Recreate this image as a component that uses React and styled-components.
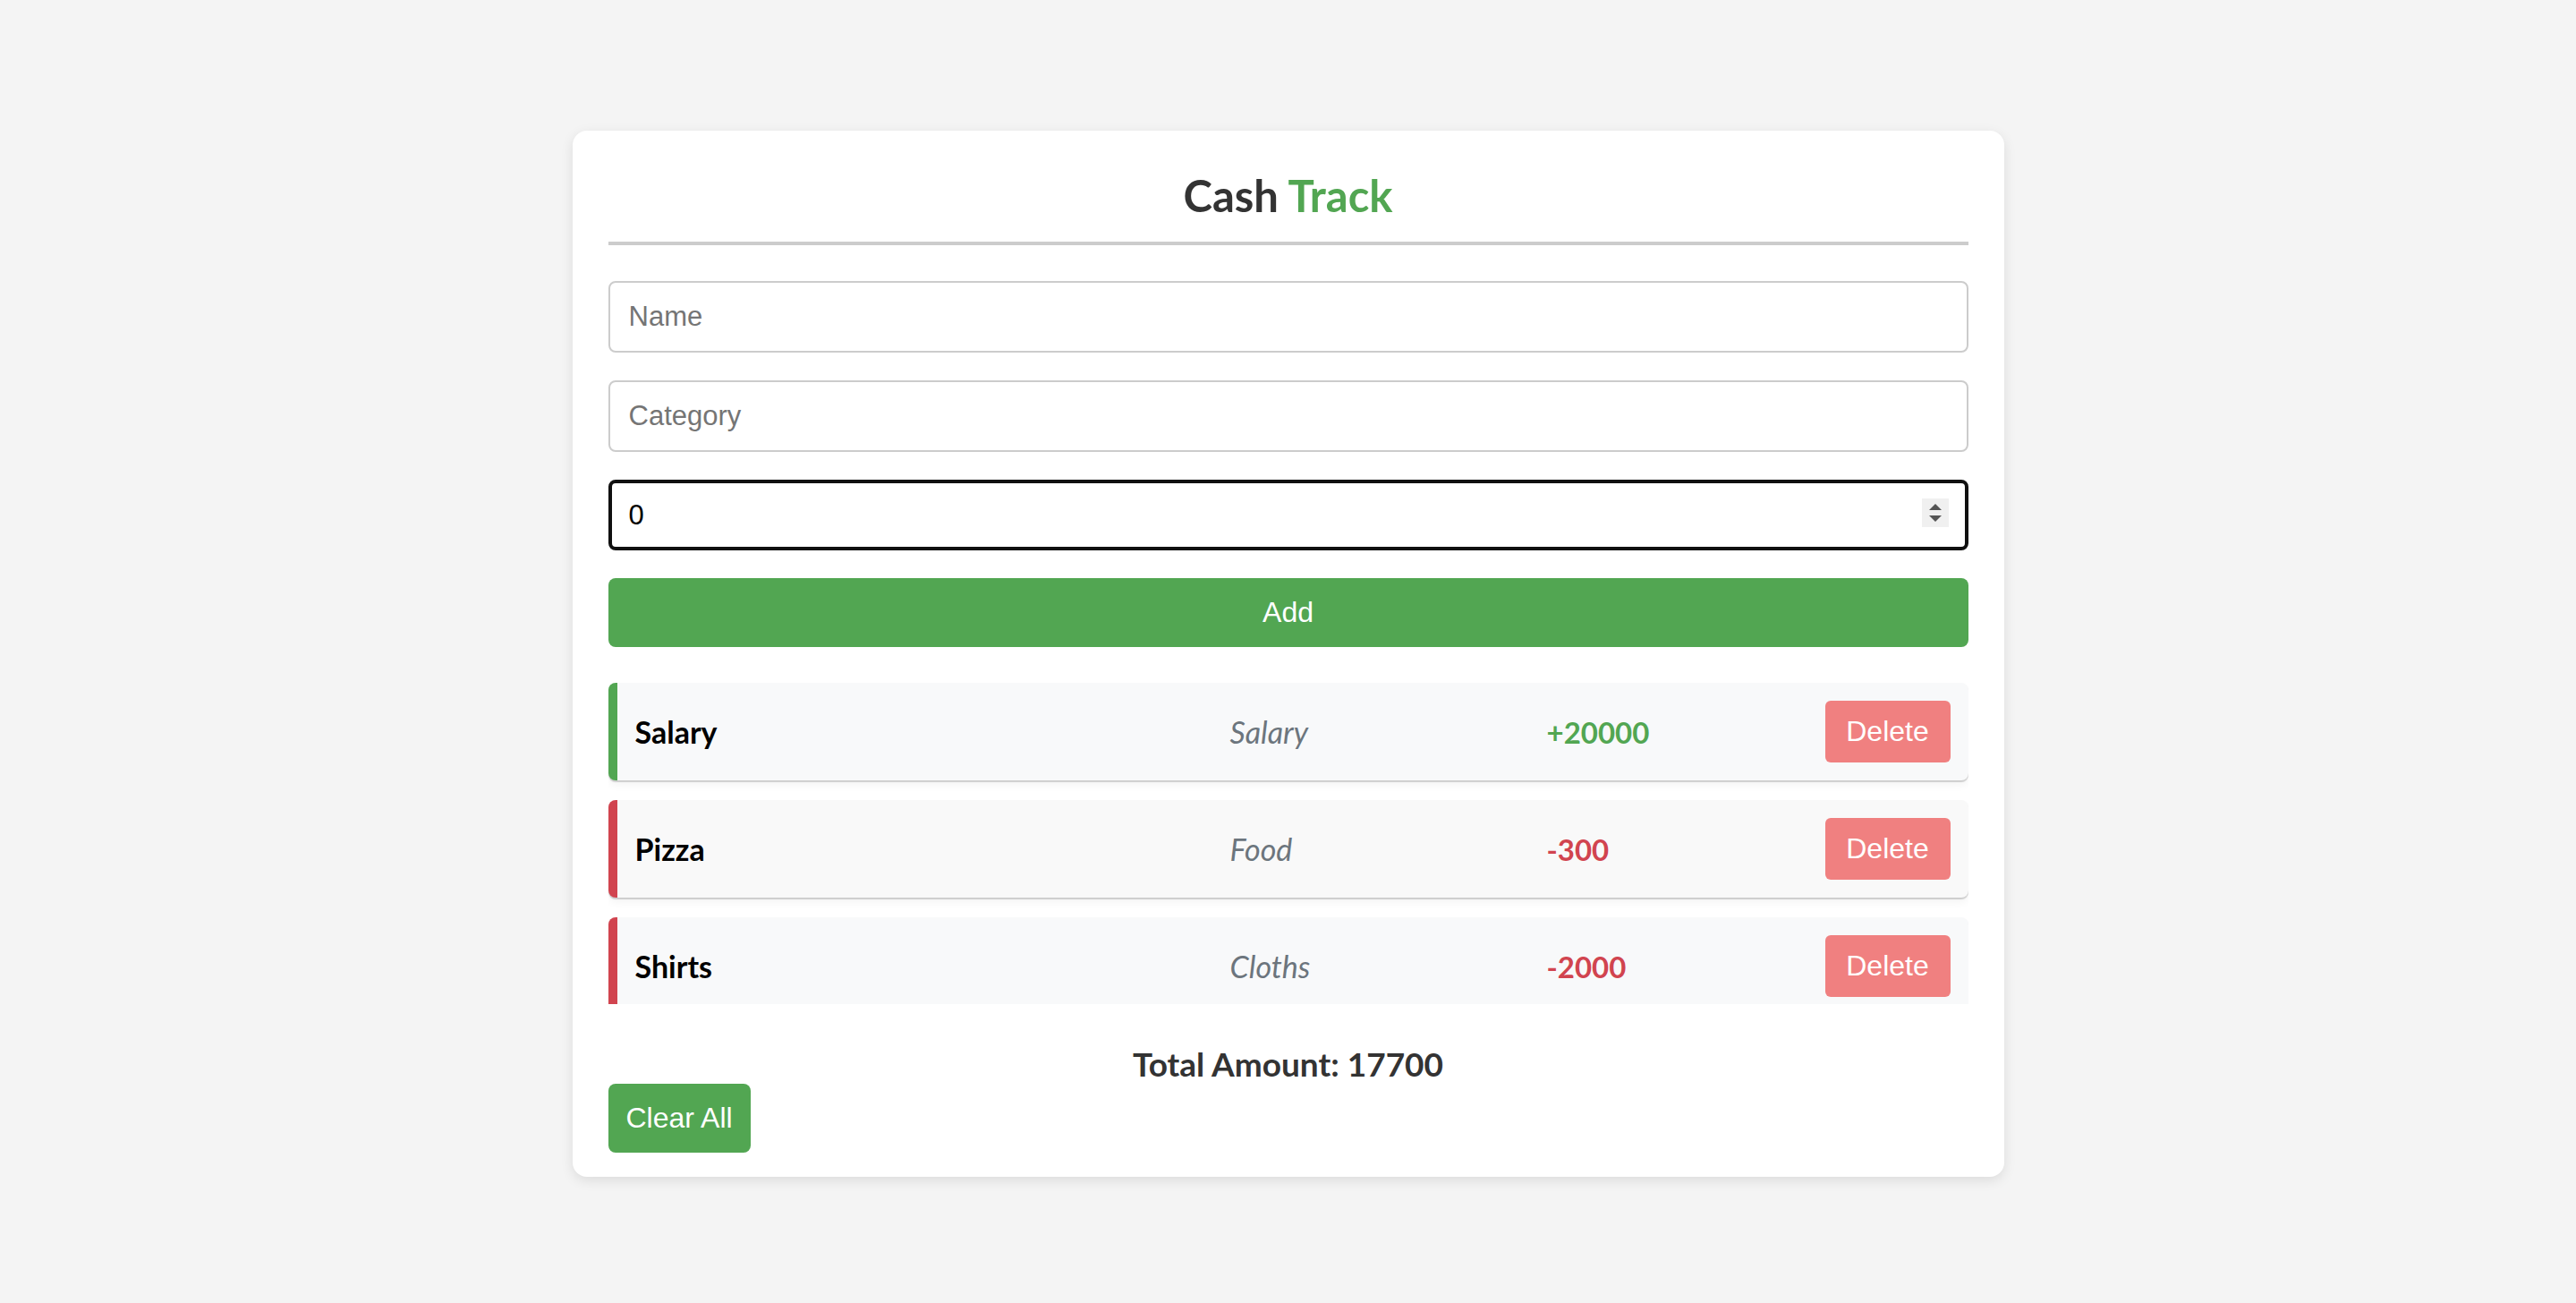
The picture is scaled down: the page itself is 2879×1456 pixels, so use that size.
import React, { useState } from "react";
import styled, { createGlobalStyle } from "styled-components";

const GlobalStyle = createGlobalStyle`
  html, body { margin: 0; padding: 0; }
  body {
    background: #f4f4f4;
    font-family: "Segoe UI", Lato, "Noto Sans", sans-serif;
  }
  * { box-sizing: border-box; }
`;

const Page = styled.div`
  min-height: 100vh;
  display: flex;
  justify-content: center;
  align-items: flex-start;
  padding-top: 146px;
`;

const Card = styled.div`
  width: 1600px;
  background: #ffffff;
  border-radius: 16px;
  padding: 40px 40px 27px;
  box-shadow: 0 4px 14px rgba(0, 0, 0, 0.1);
  display: flex;
  flex-direction: column;
`;

const Title = styled.h1`
  margin: 0;
  font-family: Lato, sans-serif;
  font-weight: 700;
  font-size: 49px;
  line-height: 64px;
  color: #333333;
  text-align: center;
  padding-bottom: 20px;
  border-bottom: 4px solid #cccccc;
`;

const Accent = styled.span`
  color: #52a652;
`;

const Form = styled.div`
  margin-top: 40px;
  display: flex;
  flex-direction: column;
  gap: 31px;
`;

const Input = styled.input`
  width: 100%;
  height: ${(p) => (p.$focused ? "79px" : "80px")};
  border: ${(p) => (p.$focused ? "4px solid #101010" : "2px solid #cccccc")};
  border-radius: 8px;
  padding: 0 ${(p) => (p.$focused ? "19px" : "21px")};
  font-family: "Liberation Sans", Arial, sans-serif;
  font-size: 31px;
  color: #000000;
  background: #ffffff;
  outline: none;
  appearance: textfield;
  -moz-appearance: textfield;
  &::placeholder { color: #757575; }
  &::-webkit-outer-spin-button,
  &::-webkit-inner-spin-button {
    -webkit-appearance: none;
    margin: 0;
  }
`;

const NumberField = styled.div`
  position: relative;
`;

const Spinner = styled.div`
  position: absolute;
  right: 22px;
  top: 21px;
  width: 30px;
  height: 32px;
  background: #f0f0f0;
  display: flex;
  flex-direction: column;
  align-items: center;
  justify-content: center;
  gap: 6px;
`;

const Arrow = styled.div`
  width: 0;
  height: 0;
  border-left: 7px solid transparent;
  border-right: 7px solid transparent;
  ${(p) =>
    p.$up
      ? "border-bottom: 7px solid #555555;"
      : "border-top: 7px solid #555555;"}
`;

const PrimaryButton = styled.button`
  height: 77px;
  border: none;
  border-radius: 8px;
  background: #52a652;
  color: #ffffff;
  font-family: "Liberation Sans", Arial, sans-serif;
  font-size: 32px;
  cursor: pointer;
  padding: 0 20px;
  align-self: ${(p) => (p.$compact ? "flex-start" : "stretch")};
`;

const List = styled.div`
  margin-top: 40px;
  display: flex;
  flex-direction: column;
  gap: 22px;
  max-height: 359px;
  overflow: hidden;
`;

const Row = styled.div`
  flex-shrink: 0;
  height: 109px;
  display: grid;
  grid-template-columns: 665px 354px 1fr 140px;
  align-items: center;
  padding: 0 20px;
  background: ${(p) => (p.$alt ? "#f9f9f9" : "#f8f9fa")};
  border-left: 10px solid ${(p) => (p.$income ? "#52a652" : "#d1444f")};
  border-radius: 8px;
  box-shadow: 0 2px 1px rgba(0, 0, 0, 0.17), 0 6px 10px rgba(0, 0, 0, 0.04);
`;

const Name = styled.span`
  font-family: Lato, sans-serif;
  font-weight: 700;
  font-size: 34px;
  color: #000000;
`;

const Category = styled.span`
  font-family: Lato, sans-serif;
  font-style: italic;
  font-size: 34px;
  color: #6c757d;
`;

const Amount = styled.span`
  font-family: Lato, sans-serif;
  font-weight: 700;
  font-size: 33px;
  color: ${(p) => (p.$income ? "#52a652" : "#d1444f")};
`;

const DeleteButton = styled.button`
  width: 140px;
  height: 69px;
  border: none;
  border-radius: 6px;
  background: #f08080;
  color: #ffffff;
  font-family: "Liberation Sans", Arial, sans-serif;
  font-size: 32px;
  cursor: pointer;
  padding: 0;
`;

const Total = styled.div`
  margin-top: 44px;
  text-align: center;
  font-family: Lato, sans-serif;
  font-weight: 700;
  font-size: 37px;
  line-height: 45px;
  color: #333333;
`;

const initial = [
  { id: 1, name: "Salary", category: "Salary", amount: 20000 },
  { id: 2, name: "Pizza", category: "Food", amount: -300 },
  { id: 3, name: "Shirts", category: "Cloths", amount: -2000 },
];

export default function App() {
  const [items, setItems] = useState(initial);
  const [name, setName] = useState("");
  const [category, setCategory] = useState("");
  const [amount, setAmount] = useState("0");

  const total = items.reduce((s, i) => s + i.amount, 0);

  const add = () => {
    const n = Number(amount);
    if (!name || !n) return;
    setItems([...items, { id: Date.now(), name, category, amount: n }]);
    setName("");
    setCategory("");
    setAmount("0");
  };

  return (
    <>
      <GlobalStyle />
      <Page>
        <Card>
          <Title>
            Cash <Accent>Track</Accent>
          </Title>
          <Form>
            <Input
              placeholder="Name"
              value={name}
              onChange={(e) => setName(e.target.value)}
            />
            <Input
              placeholder="Category"
              value={category}
              onChange={(e) => setCategory(e.target.value)}
            />
            <NumberField>
              <Input
                type="number"
                $focused
                value={amount}
                onChange={(e) => setAmount(e.target.value)}
              />
              <Spinner>
                <Arrow $up />
                <Arrow />
              </Spinner>
            </NumberField>
            <PrimaryButton onClick={add}>Add</PrimaryButton>
          </Form>
          <List>
            {items.map((item, idx) => {
              const income = item.amount > 0;
              return (
                <Row key={item.id} $income={income} $alt={idx === 1}>
                  <Name>{item.name}</Name>
                  <Category>{item.category}</Category>
                  <Amount $income={income}>
                    {income ? `+${item.amount}` : item.amount}
                  </Amount>
                  <DeleteButton
                    onClick={() => setItems(items.filter((i) => i.id !== item.id))}
                  >
                    Delete
                  </DeleteButton>
                </Row>
              );
            })}
          </List>
          <Total>Total Amount: {total}</Total>
          <PrimaryButton $compact onClick={() => setItems([])}>
            Clear All
          </PrimaryButton>
        </Card>
      </Page>
    </>
  );
}
